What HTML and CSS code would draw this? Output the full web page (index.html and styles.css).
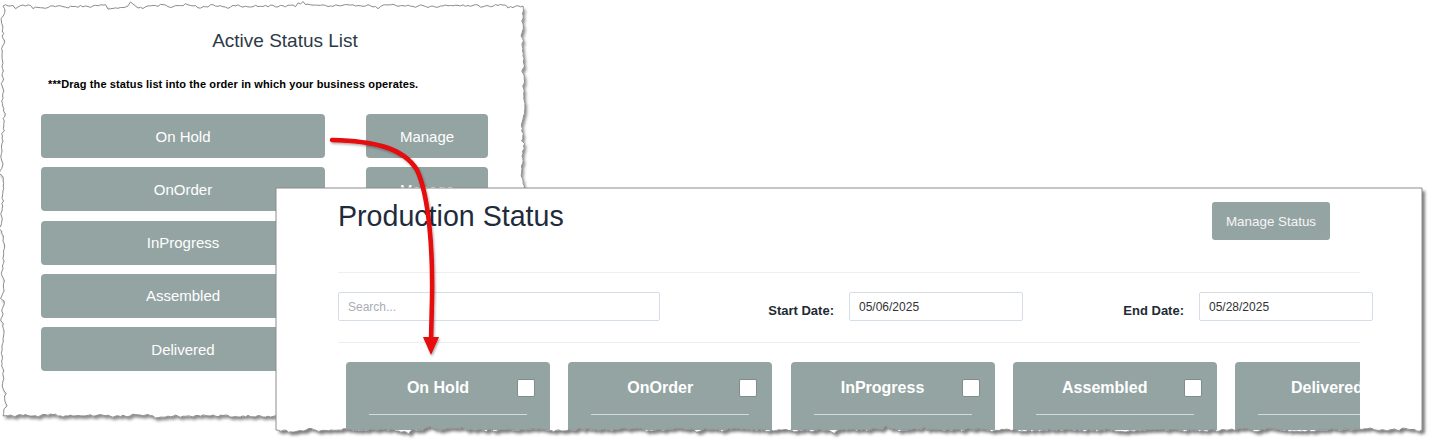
FILE: index.html
```html
<!DOCTYPE html>
<html lang="en">
<head>
<meta charset="utf-8">
<title>Status list to production status</title>
<link rel="stylesheet" href="styles.css">
</head>
<body>
<div class="canvas">
  <section class="sheet sheet-status" data-w="520" data-h="410" data-torn="all" data-seed="91">
    <svg class="sheet-bg" width="520" height="410">
      <defs>
        <filter id="shadowA" x="-3%" y="-3%" width="107%" height="108%">
          <feDropShadow dx="2" dy="3" stdDeviation="1.6" flood-color="#000" flood-opacity="0.45"/>
        </filter>
      </defs>
      <path class="sheet-fill" filter="url(#shadowA)" d=""/>
    </svg>
    <div class="sheet-body status-body">
      <h2 class="status-title">Active Status List</h2>
      <p class="status-hint">***Drag the status list into the order in which your business operates.</p>
      <div class="status-list">
        <div class="status-row"><div class="status-btn status-name">On Hold</div><div class="status-btn status-manage">Manage</div></div>
        <div class="status-row"><div class="status-btn status-name">OnOrder</div><div class="status-btn status-manage">Manage</div></div>
        <div class="status-row"><div class="status-btn status-name">InProgress</div><div class="status-btn status-manage">Manage</div></div>
        <div class="status-row"><div class="status-btn status-name">Assembled</div><div class="status-btn status-manage">Manage</div></div>
        <div class="status-row"><div class="status-btn status-name">Delivered</div><div class="status-btn status-manage">Manage</div></div>
      </div>
    </div>
    <svg class="sheet-edge" width="520" height="410"><path class="edge-line" d=""/></svg>
  </section>

  <section class="sheet sheet-production" data-w="1146" data-h="242" data-torn="bottom" data-seed="4242">
    <svg class="sheet-bg" width="1146" height="242">
      <defs>
        <filter id="shadowB" x="-1%" y="-3%" width="102%" height="110%">
          <feDropShadow dx="3" dy="3" stdDeviation="1.6" flood-color="#000" flood-opacity="0.5"/>
        </filter>
      </defs>
      <path class="sheet-fill" filter="url(#shadowB)" d=""/>
    </svg>
    <div class="sheet-body prod-body">
      <div class="prod-header">
        <h1 class="prod-title">Production Status</h1>
        <div class="manage-status">Manage Status</div>
      </div>
      <div class="rule"></div>
      <div class="filters">
        <div class="filter-cell"><div class="field field-search"><span class="placeholder">Search...</span></div></div>
        <div class="filter-cell filter-date"><span class="filter-label">Start Date:</span><div class="field field-date">05/06/2025</div></div>
        <div class="filter-cell filter-date"><span class="filter-label">End Date:</span><div class="field field-date">05/28/2025</div></div>
      </div>
      <div class="rule"></div>
      <div class="cards">
        <div class="card"><div class="card-head"><span class="card-title">On Hold</span><span class="card-check"></span></div><div class="card-rule"></div></div>
        <div class="card"><div class="card-head"><span class="card-title">OnOrder</span><span class="card-check"></span></div><div class="card-rule"></div></div>
        <div class="card"><div class="card-head"><span class="card-title">InProgress</span><span class="card-check"></span></div><div class="card-rule"></div></div>
        <div class="card"><div class="card-head"><span class="card-title">Assembled</span><span class="card-check"></span></div><div class="card-rule"></div></div>
        <div class="card"><div class="card-head"><span class="card-title">Delivered</span><span class="card-check"></span></div><div class="card-rule"></div></div>
      </div>
    </div>
    <svg class="sheet-edge" width="1146" height="242"><path class="edge-line" d=""/></svg>
  </section>

  <svg class="arrow" width="1434" height="445" viewBox="0 0 1434 445">
    <defs>
      <filter id="arrowShadow" x="-20%" y="-5%" width="140%" height="110%">
        <feDropShadow dx="1" dy="1.5" stdDeviation="1" flood-color="#000" flood-opacity="0.35"/>
      </filter>
    </defs>
    <g filter="url(#arrowShadow)">
      <path class="arrow-line" d="M332 140 C 372 141, 403 147, 417 170 C 429 196, 433 250, 432 300 L 431 340"/>
      <polygon class="arrow-head" points="423,337 439,337 431,355"/>
    </g>
  </svg>
</div>
<script src="script.js"></script>
</body>
</html>
```

FILE: styles.css
```css
* { box-sizing: border-box; }
html, body { margin: 0; background: #fff; }
body { font-family: "Liberation Sans", Arial, sans-serif; }

.canvas { position: relative; width: 1434px; height: 445px; overflow: hidden; background: #fff; }

.sheet { position: absolute; }
.sheet-status { left: 3px; top: 6px; width: 520px; height: 410px; z-index: 1; }
.sheet-production { left: 276px; top: 188px; width: 1146px; height: 242px; z-index: 2; }

.sheet-bg, .sheet-edge { position: absolute; left: 0; top: 0; overflow: visible; pointer-events: none; }
.sheet-bg { z-index: 0; }
.sheet-edge { z-index: 2; }
.sheet-fill { fill: #fff; }
.edge-line { fill: none; stroke: #8c8c8c; stroke-width: 1; }
.sheet-body { position: relative; z-index: 1; height: 100%; }

/* Active status list */
.status-body { padding: 24px 0 0 38px; }
.status-title { margin: 0; width: 488px; text-align: center; font-size: 19px; font-weight: normal; line-height: 22px; color: #2c3a48; }
.status-hint { margin: 26px 0 0 7px; font-size: 11px; font-weight: bold; line-height: 13px; color: #000; letter-spacing: 0.11px; }
.status-list { display: flex; flex-direction: column; gap: 9.33px; margin-top: 23px; }
.status-row { display: flex; gap: 41px; }
.status-btn { height: 44px; display: flex; align-items: center; justify-content: center; background: #94a4a3; color: #fff; font-size: 15px; border-radius: 4px; }
.status-name { width: 284px; }
.status-manage { width: 122px; }

/* Production status */
.prod-body { padding: 12px 62px 0 62px; overflow: hidden; }
.prod-header { display: flex; justify-content: space-between; align-items: flex-start; height: 72px; }
.prod-title { margin: 0; font-size: 28.6px; font-weight: normal; line-height: 33px; color: #1e2c3c; }
.manage-status { margin: 2px 30px 0 0; width: 118px; height: 38px; display: flex; align-items: center; justify-content: center; background: #94a4a3; color: #f4f6f6; font-size: 13.4px; border-radius: 3px; }
.rule { height: 1px; background: #eceeef; }

.filters { display: grid; grid-template-columns: 322px 363px 350px; margin-right: -13px; padding: 19px 0 21px; }
.filter-cell { display: flex; align-items: center; }
.filter-date { justify-content: flex-end; gap: 15px; }
.filter-label { font-size: 13px; font-weight: bold; color: #222a33; margin-top: 8px; }
.field { height: 29px; border: 1px solid #d5dde7; border-radius: 2px; display: flex; align-items: center; padding-left: 9px; font-size: 12px; color: #333; background: #fff; }
.field-search { width: 322px; }
.field-date { width: 174px; }
.placeholder { color: #a9aeb4; }

.cards { display: flex; gap: 18.25px; margin: 19px 0 0 8px; overflow: hidden; }
.card { flex: 0 0 204px; height: 120px; background: #94a4a3; border-radius: 4px 4px 0 0; }
.card-head { height: 52px; display: flex; align-items: center; padding: 0 15px 0 13px; }
.card-title { flex: 1; text-align: center; font-size: 16px; font-weight: bold; color: #fff; white-space: nowrap; }
.card-check { width: 18px; height: 18px; background: #fff; border: 1px solid #7f8d8c; border-radius: 2px; flex: 0 0 18px; }
.card-rule { height: 1px; margin: 0 23px; background: #d3dada; }

/* arrow */
.arrow { position: absolute; left: 0; top: 0; z-index: 10; pointer-events: none; }
.arrow-line { fill: none; stroke: #e6070b; stroke-width: 4.5; stroke-linecap: round; }
.arrow-head { fill: #e6070b; }
```

FILE: script.js
```js
(function () {
  function makeRandom(seed) {
    var s = seed % 2147483647;
    if (s <= 0) s += 2147483646;
    return function () {
      s = (s * 16807) % 2147483647;
      return s / 2147483647;
    };
  }

  function edge(pts, rnd, x0, y0, x1, y1, amp, step) {
    var dx = x1 - x0, dy = y1 - y0;
    var len = Math.sqrt(dx * dx + dy * dy);
    var n = amp > 0 ? Math.max(1, Math.round(len / step)) : 1;
    var nx = -dy / len, ny = dx / len, o = 0;
    for (var i = 1; i <= n; i++) {
      var t = i / n;
      if (amp > 0 && i < n) {
        o = o * 0.55 + (rnd() - 0.5) * amp;
        if (rnd() < 0.07) o += (rnd() - 0.5) * amp * 2.2;
      } else {
        o = 0;
      }
      pts.push([x0 + dx * t + nx * o, y0 + dy * t + ny * o]);
    }
  }

  function toPath(pts) {
    return 'M' + pts.map(function (p) { return p[0].toFixed(1) + ' ' + p[1].toFixed(1); }).join(' L') + ' Z';
  }

  var sheets = document.querySelectorAll('.sheet');
  Array.prototype.forEach.call(sheets, function (sheet) {
    var w = +sheet.dataset.w, h = +sheet.dataset.h;
    var all = sheet.dataset.torn === 'all';
    var rnd = makeRandom(+sheet.dataset.seed);
    var a = 2.6, step = 2.5;
    var pts = [[0, 0]];
    edge(pts, rnd, 0, 0, w, 0, all ? a : 0, step);
    edge(pts, rnd, w, 0, w, h, all ? a : 0, step);
    edge(pts, rnd, w, h, 0, h, a, step);
    edge(pts, rnd, 0, h, 0, 0, all ? a : 0, step);
    var d = toPath(pts);
    sheet.querySelector('.sheet-fill').setAttribute('d', d);
    sheet.querySelector('.edge-line').setAttribute('d', d);
    sheet.querySelector('.sheet-body').style.clipPath = "path('" + d + "')";
  });
})();
```
